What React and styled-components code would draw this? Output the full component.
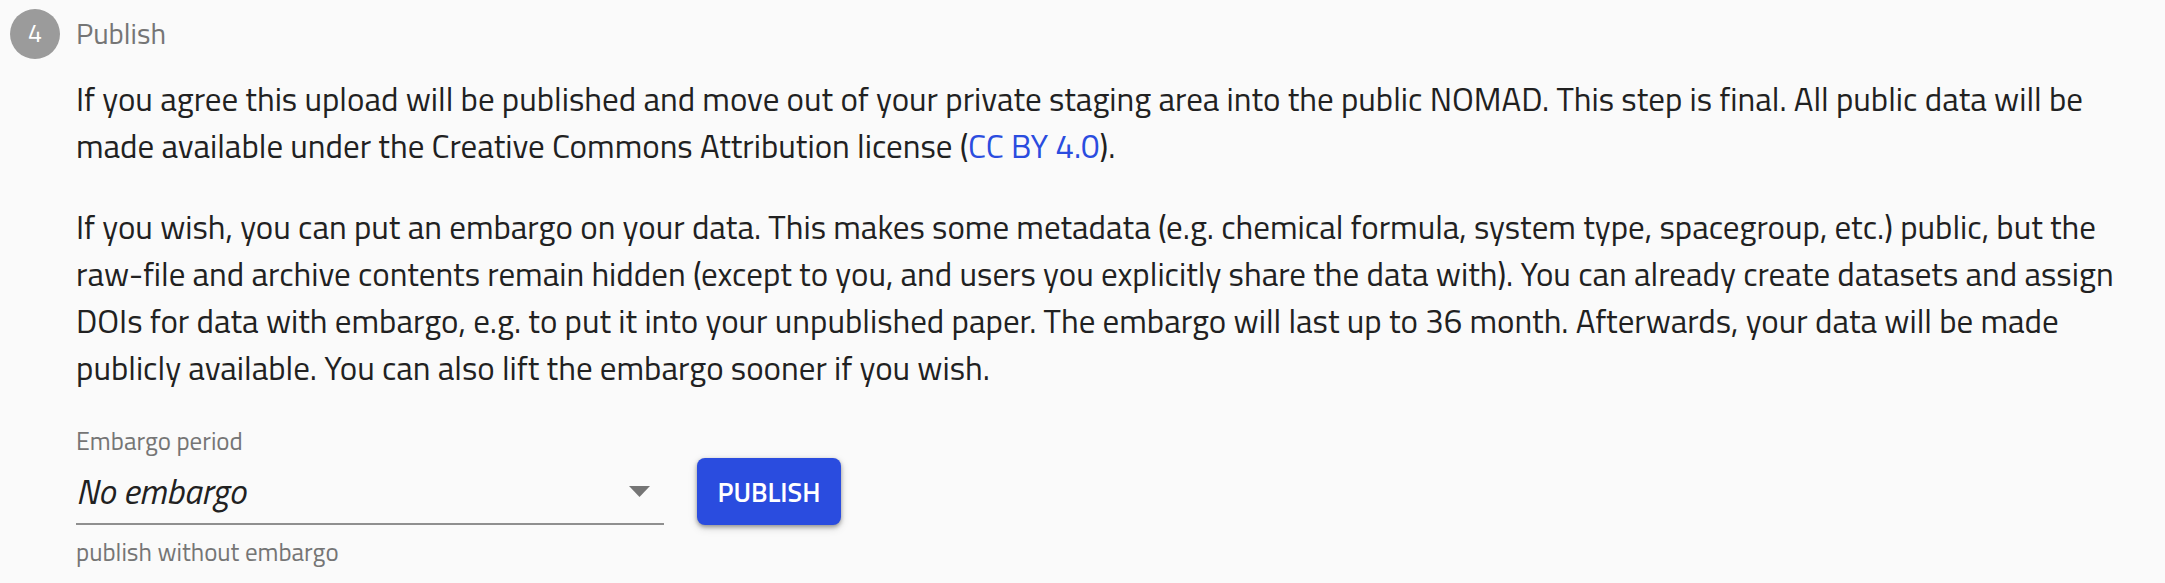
import React from 'react';
import styled, { createGlobalStyle } from 'styled-components';

const GlobalStyle = createGlobalStyle`
  *, *::before, *::after { box-sizing: border-box; }
  body {
    margin: 0;
    background: #fafafa;
    color: #212121;
    font-family: "Titillium Web", Roboto, "Liberation Sans", sans-serif;
  }
`;

const Step = styled.section`
  padding: 9px 32px 14px 10px;
`;

const StepHeader = styled.header`
  display: flex;
  align-items: flex-start;
  gap: 16px;
`;

const StepNumber = styled.span`
  flex: none;
  width: 50px;
  height: 50px;
  border-radius: 50%;
  background: #9b9b9b;
  color: #fff;
  font-size: 25px;
  line-height: 48px;
  text-align: center;
`;

const StepLabel = styled.h2`
  margin: 0;
  color: #757575;
  font-size: 29px;
  font-weight: 400;
  line-height: 48px;
`;

const StepContent = styled.div`
  padding: 17px 0 0 66px;
`;

const Paragraph = styled.p`
  margin: 0 0 34px;
  font-size: 33px;
  line-height: 47px;
`;

const Link = styled.a`
  color: #2a4cdf;
  text-decoration: none;
`;

const Actions = styled.form`
  display: flex;
  align-items: flex-start;
  gap: 33px;
`;

const Field = styled.div`
  display: flex;
  flex-direction: column;
  width: 588px;
`;

const FieldLabel = styled.label`
  color: #757575;
  font-size: 25px;
  line-height: 30px;
`;

const SelectBox = styled.div`
  display: grid;
  align-items: center;
  border-bottom: 2px solid #8f8f8f;
`;

const Select = styled.select`
  grid-area: 1 / 1;
  appearance: none;
  width: 100%;
  height: 67px;
  padding: 2px 0 0;
  border: 0;
  background: transparent;
  color: inherit;
  font-family: inherit;
  font-size: 35px;
  font-style: italic;
  line-height: 48px;
`;

const Arrow = styled.svg`
  grid-area: 1 / 1;
  justify-self: end;
  margin: 4px 14px 0 0;
  pointer-events: none;
`;

const HelperText = styled.span`
  padding-top: 11px;
  color: #757575;
  font-size: 25px;
  line-height: 32px;
`;

const Button = styled.button`
  margin-top: 32px;
  padding: 0;
  width: 144px;
  height: 67px;
  border: 0;
  border-radius: 8px;
  background: #2a4cdf;
  color: #fff;
  font: 600 27px/40px "Titillium Web", Roboto, "Liberation Sans", sans-serif;
  box-shadow: 0 2px 4px rgba(0, 0, 0, 0.35), 0 3px 10px rgba(0, 0, 0, 0.14);
`;

export default function App() {
  return (
    <>
      <GlobalStyle />
      <Step>
        <StepHeader>
          <StepNumber>4</StepNumber>
          <StepLabel>Publish</StepLabel>
        </StepHeader>
        <StepContent>
          <Paragraph>
            If you agree this upload will be published and move out of your private staging area
            into the public NOMAD. This step is final. All public data will be made available
            under the Creative Commons Attribution license (
            <Link href="https://creativecommons.org/licenses/by/4.0/">CC BY 4.0</Link>).
          </Paragraph>
          <Paragraph>
            If you wish, you can put an embargo on your data. This makes some metadata (e.g.
            chemical formula, system type, spacegroup, etc.) public, but the raw-file and archive
            contents remain hidden (except to you, and users you explicitly share the data with).
            You can already create datasets and assign DOIs for data with embargo, e.g. to put it
            into your unpublished paper. The embargo will last up to 36 month. Afterwards, your
            data will be made publicly available. You can also lift the embargo sooner if you
            wish.
          </Paragraph>
          <Actions>
            <Field>
              <FieldLabel htmlFor="embargo">Embargo period</FieldLabel>
              <SelectBox>
                <Select id="embargo" aria-describedby="embargo-help" defaultValue="0">
                  <option value="0">No embargo</option>
                  <option value="36">36</option>
                </Select>
                <Arrow width="21" height="11" viewBox="0 0 21 11" aria-hidden="true">
                  <path d="M0 0h21L10.500 11z" fill="#757575" />
                </Arrow>
              </SelectBox>
              <HelperText id="embargo-help">publish without embargo</HelperText>
            </Field>
            <Button type="button">PUBLISH</Button>
          </Actions>
        </StepContent>
      </Step>
    </>
  );
}
